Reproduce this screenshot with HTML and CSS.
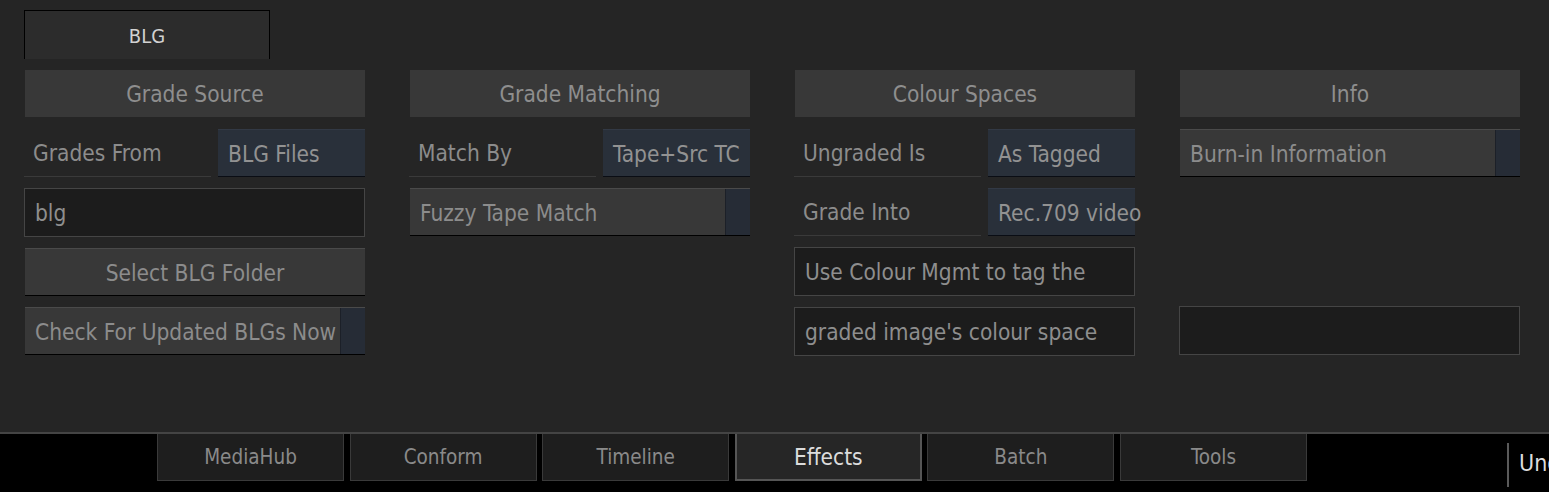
FILE: index.html
```html
<!DOCTYPE html>
<html>
<head>
<meta charset="utf-8">
<link rel="stylesheet" href="styles.css">
</head>
<body>
<div class="main">
  <div class="tabrow"><div class="toptab">BLG</div></div>
  <div class="columns">
    <div class="col">
      <div class="header">Grade Source</div>
      <div class="pair">
        <div class="label">Grades From</div>
        <div class="value">BLG Files</div>
      </div>
      <div class="input">blg</div>
      <div class="button">Select BLG Folder</div>
      <div class="toggle"><span class="tlabel">Check For Updated BLGs Now</span><span class="tbox"></span></div>
    </div>
    <div class="col">
      <div class="header">Grade Matching</div>
      <div class="pair">
        <div class="label">Match By</div>
        <div class="value">Tape+Src TC</div>
      </div>
      <div class="toggle"><span class="tlabel">Fuzzy Tape Match</span><span class="tbox"></span></div>
    </div>
    <div class="col">
      <div class="header">Colour Spaces</div>
      <div class="pair">
        <div class="label">Ungraded Is</div>
        <div class="value">As Tagged</div>
      </div>
      <div class="pair">
        <div class="label">Grade Into</div>
        <div class="value">Rec.709 video</div>
      </div>
      <div class="input">Use Colour Mgmt to tag the</div>
      <div class="input">graded image's colour space</div>
    </div>
    <div class="col">
      <div class="header">Info</div>
      <div class="toggle"><span class="tlabel">Burn-in Information</span><span class="tbox"></span></div>
      <div class="spacer"></div>
      <div class="spacer"></div>
      <div class="input wide"></div>
    </div>
  </div>
</div>
<div class="bottombar">
  <div class="tabs">
    <div class="tab">MediaHub</div>
    <div class="tab">Conform</div>
    <div class="tab">Timeline</div>
    <div class="tab active">Effects</div>
    <div class="tab">Batch</div>
    <div class="tab">Tools</div>
  </div>
  <div class="right">
    <div class="vline"></div>
    <div class="undo">Undo</div>
  </div>
</div>
</body>
</html>
```

FILE: styles.css
```css
html, body {
  margin: 0;
  padding: 0;
  width: 1549px;
  height: 492px;
  overflow: hidden;
  background: #252525;
  font-family: "DejaVu Sans Condensed", "DejaVu Sans", sans-serif;
  font-size: 22.5px;
  color: #8c8c8c;
}
.main {
  height: 432px;
  padding: 10px 0 0 24px;
  box-sizing: border-box;
}
.tabrow {
  display: flex;
}
.toptab {
  width: 246px;
  height: 49px;
  box-sizing: border-box;
  border: 1px solid #000;
  border-bottom: none;
  background: #2c2c2c;
  color: #d2d2d2;
  font-size: 20px;
  display: flex;
  align-items: center;
  justify-content: center;
  padding-top: 1px;
}
.columns {
  display: flex;
  gap: 45px;
  margin-top: 11px;
  padding-left: 1px;
}
.col {
  width: 340px;
  display: flex;
  flex-direction: column;
  gap: 11px;
}
.header {
  height: 47px;
  background: #383838;
  display: flex;
  align-items: center;
  justify-content: center;
  color: #8e8e8e;
  margin-bottom: 1px;
  padding-top: 1px;
  box-sizing: border-box;
}
.pair {
  display: flex;
  gap: 7px;
  height: 48px;
  margin-left: -1px;
}
.label {
  width: 187px;
  box-sizing: border-box;
  border-bottom: 1px solid #3a3a3a;
  padding-left: 9px;
  padding-top: 1px;
  display: flex;
  align-items: center;
}
.value {
  width: 147px;
  box-sizing: border-box;
  background: #29303a;
  border-top: 1px solid #323945;
  border-bottom: 1px solid #0a0d14;
  padding-left: 10px;
  padding-top: 1px;
  display: flex;
  align-items: center;
  white-space: nowrap;
  color: #929292;
}
.input {
  height: 49px;
  box-sizing: border-box;
  margin-left: -1px;
  width: 341px;
  background: #1c1c1c;
  border: 1px solid #454545;
  padding-left: 10px;
  padding-top: 1px;
  display: flex;
  align-items: center;
  white-space: nowrap;
  color: #8e8e8e;
}
.button {
  height: 48px;
  box-sizing: border-box;
  background: #383838;
  border-top: 1px solid #4a4a4a;
  border-bottom: 1px solid #000;
  padding-top: 1px;
  display: flex;
  align-items: center;
  justify-content: center;
}
.toggle {
  height: 48px;
  box-sizing: border-box;
  display: flex;
  background: #383838;
  border-top: 1px solid #4a4a4a;
  border-bottom: 1px solid #000;
}
.tlabel {
  flex: 1;
  display: flex;
  align-items: center;
  padding-left: 10px;
  padding-top: 1px;
  white-space: nowrap;
}
.tbox {
  width: 24px;
  background: #262c36;
  border-left: 1px solid #1c2028;
}
.spacer {
  height: 48px;
}
.bottombar {
  height: 60px;
  background: #000;
  border-top: 2px solid #444;
  box-sizing: border-box;
  display: flex;
}
.tabs {
  display: flex;
  gap: 5.6px;
  padding-left: 157px;
  height: 47px;
}
.tab {
  width: 187px;
  box-sizing: border-box;
  background: #1e1e1e;
  border: 1px solid #3a3a3a;
  border-top: none;
  display: flex;
  align-items: center;
  justify-content: center;
  color: #8a8a8a;
  font-size: 20.5px;
}
.tab.active {
  background: #262626;
  border: 2px solid #555;
  border-top: none;
  color: #dcdcdc;
  font-size: 22.5px;
}
.right {
  display: flex;
  margin-left: auto;
  padding-top: 9px;
  width: 42px;
  overflow: hidden;
}
.vline {
  width: 2px;
  height: 44px;
  background: #5a5a5a;
  flex: none;
}
.undo {
  margin-left: 10px;
  color: #dcdcdc;
  font-size: 23px;
  padding-top: 7px;
  white-space: nowrap;
}
```
